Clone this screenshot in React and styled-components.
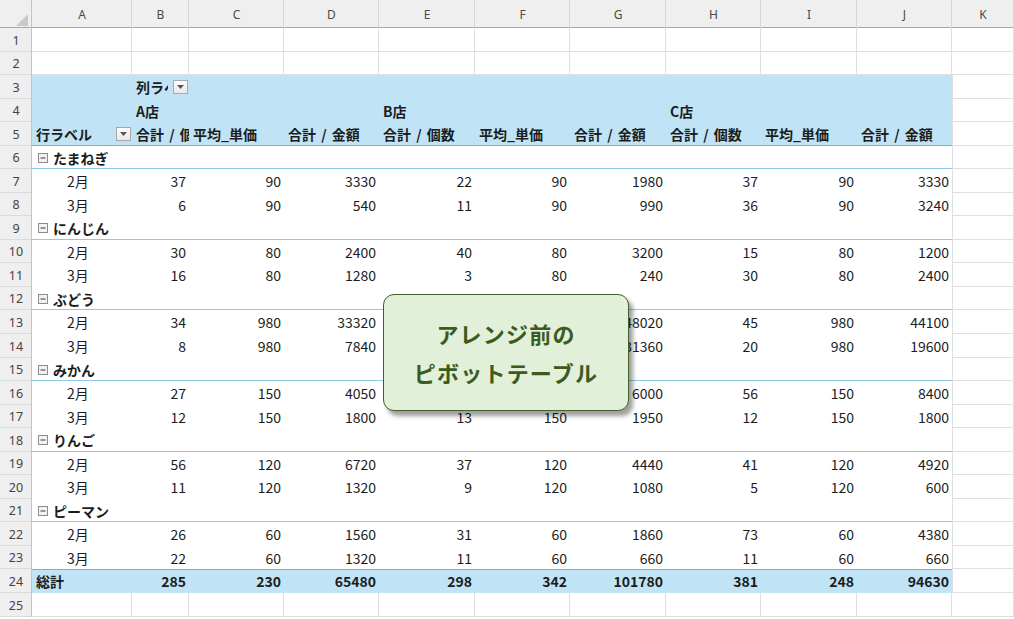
import React from "react";
import styled, { createGlobalStyle } from "styled-components";

const GlobalStyle = createGlobalStyle`
  html, body {
    margin: 0;
    padding: 0;
    background: #ffffff;
  }
  body {
    font-family: "Noto Sans CJK JP", "Noto Sans", sans-serif;
  }
`;

const COLS = "32px 100px 57px 95px 95px 96px 95px 96px 95px 96px 95px 1fr";
const LETTERS = ["A", "B", "C", "D", "E", "F", "G", "H", "I", "J", "K"];
const BLUE = "#c0e4f5";
const GRID = "#dfdfdf";

const LINES = {
  grid: `inset -1px -1px 0 ${GRID}`,
  gridLeft: `inset 1px 0 0 ${GRID}, inset -1px -1px 0 ${GRID}`,
  none: "none",
  cat: "inset 0 -1px 0 #8fc9e8",
  head: "inset 0 -1px 0 #6db4dd",
  total: "inset 0 1px 0 #6db4dd",
};

const Sheet = styled.div`
  position: relative;
  width: 1014px;
  height: 619px;
  overflow: hidden;
  background: #fff;
`;

const HeaderBar = styled.div`
  display: grid;
  grid-template-columns: ${COLS};
  height: 28px;
  background: #efefef;
`;

const ColHead = styled.div`
  display: flex;
  align-items: center;
  justify-content: center;
  font-family: "Noto Sans", sans-serif;
  font-size: 12px;
  color: #4a4a4a;
  box-shadow: inset -1px 0 0 #d6d6d6, inset 0 -1px 0 #a9a9a9;
`;

const Corner = styled.div`
  display: flex;
  align-items: flex-end;
  justify-content: flex-end;
  padding: 0 4px 2px 0;
  box-shadow: inset -1px 0 0 #c4c4c4, inset 0 -1px 0 #a9a9a9;
`;

const Row = styled.div`
  display: grid;
  grid-template-columns: ${COLS};
  height: ${(p) => p.$h}px;
`;

const RowNum = styled.div`
  display: flex;
  align-items: center;
  justify-content: center;
  background: #efefef;
  font-family: "Noto Sans", sans-serif;
  font-size: 12.5px;
  color: #444;
  box-shadow: inset -1px 0 0 #c4c4c4, inset 0 -1px 0 #dadada;
`;

const Cell = styled.div`
  display: flex;
  align-items: center;
  justify-content: ${(p) => (p.$align === "right" ? "flex-end" : "flex-start")};
  gap: 5px;
  min-width: 0;
  overflow: hidden;
  white-space: nowrap;
  padding: 0 3px 0 ${(p) => p.$indent ?? 4}px;
  font-size: 14px;
  font-weight: ${(p) => (p.$bold ? 700 : 400)};
  word-spacing: 2px;
  color: #1c1c1c;
  background: ${(p) => (p.$fill ? BLUE : "#fff")};
  box-shadow: ${(p) => LINES[p.$line || "none"]};
`;

const Clip = styled.span`
  flex: 1;
  min-width: 0;
  overflow: hidden;
`;

const DropBtn = styled.span`
  flex: none;
  width: 15px;
  height: 14px;
  box-sizing: border-box;
  border: 1px solid #a8a8a8;
  background: linear-gradient(#fdfdfd, #e9e9e9);
  display: flex;
  align-items: center;
  justify-content: center;
  margin-right: -2px;
`;

const Callout = styled.div`
  position: absolute;
  left: 383px;
  top: 294px;
  width: 246px;
  height: 117px;
  box-sizing: border-box;
  background: #e2efd9;
  border: 1.5px solid #41602c;
  border-radius: 11px;
  box-shadow: 4px 5px 4px rgba(0, 0, 0, 0.38);
  display: flex;
  flex-direction: column;
  align-items: center;
  justify-content: center;
`;

const CalloutLine = styled.div`
  font-family: "Noto Sans CJK JP", sans-serif;
  font-size: 22px;
  font-weight: 700;
  line-height: 39px;
  letter-spacing: 1.2px;
  color: #3b5b20;
`;

const Dropdown = () => (
  <DropBtn>
    <svg width="7" height="4" viewBox="0 0 7 4">
      <polygon points="0,0 7,0 3.5,4" fill="#555" />
    </svg>
  </DropBtn>
);

const Collapse = () => (
  <svg width="10" height="10" viewBox="0 0 10 10" style={{ flex: "none" }}>
    <rect x="0.5" y="0.5" width="9" height="9" fill="#f2f2f2" stroke="#8c8c8c" />
    <line x1="2.5" y1="5" x2="7.5" y2="5" stroke="#3a3a3a" strokeWidth="1" />
  </svg>
);

const cats = [
  ["たまねぎ", [37, 90, 3330, 22, 90, 1980, 37, 90, 3330], [6, 90, 540, 11, 90, 990, 36, 90, 3240]],
  ["にんじん", [30, 80, 2400, 40, 80, 3200, 15, 80, 1200], [16, 80, 1280, 3, 80, 240, 30, 80, 2400]],
  ["ぶどう", [34, 980, 33320, 49, 980, 48020, 45, 980, 44100], [8, 980, 7840, 32, 980, 31360, 20, 980, 19600]],
  ["みかん", [27, 150, 4050, 40, 150, 6000, 56, 150, 8400], [12, 150, 1800, 13, 150, 1950, 12, 150, 1800]],
  ["りんご", [56, 120, 6720, 37, 120, 4440, 41, 120, 4920], [11, 120, 1320, 9, 120, 1080, 5, 120, 600]],
  ["ピーマン", [26, 60, 1560, 31, 60, 1860, 73, 60, 4380], [22, 60, 1320, 11, 60, 660, 11, 60, 660]],
];

const totals = [285, 230, 65480, 298, 342, 101780, 381, 248, 94630];
const measures = ["合計 / 個数", "平均_単価", "合計 / 金額"];

const rows = [
  { type: "blank" },
  { type: "blank" },
  { type: "h3" },
  { type: "h4" },
  { type: "h5" },
  ...cats.flatMap(([name, feb, mar]) => [
    { type: "cat", label: name },
    { type: "data", label: "2月", vals: feb },
    { type: "data", label: "3月", vals: mar },
  ]),
  { type: "total", vals: totals },
  { type: "blank" },
];

const rowHeight = (i) =>
  Math.round(28 + (i + 1) * 23.54) - Math.round(28 + i * 23.54);

function renderCells(row) {
  const idx = [0, 1, 2, 3, 4, 5, 6, 7, 8, 9];
  switch (row.type) {
    case "blank":
      return idx.map((i) => <Cell key={i} $line="grid" />);
    case "h3":
      return idx.map((i) =>
        i === 1 ? (
          <Cell key={i} $fill $bold>
            <Clip>列ラベル</Clip>
            <Dropdown />
          </Cell>
        ) : (
          <Cell key={i} $fill />
        )
      );
    case "h4":
      return idx.map((i) => (
        <Cell key={i} $fill $bold>
          {i === 1 ? "A店" : i === 4 ? "B店" : i === 7 ? "C店" : ""}
        </Cell>
      ));
    case "h5":
      return idx.map((i) =>
        i === 0 ? (
          <Cell key={i} $fill $bold $line="head">
            <Clip>行ラベル</Clip>
            <Dropdown />
          </Cell>
        ) : (
          <Cell key={i} $fill $bold $line="head">
            {measures[(i - 1) % 3]}
          </Cell>
        )
      );
    case "cat":
      return idx.map((i) =>
        i === 0 ? (
          <Cell key={i} $bold $line="cat" $indent={6}>
            <Collapse />
            {row.label}
          </Cell>
        ) : (
          <Cell key={i} $line="cat" />
        )
      );
    case "data":
      return idx.map((i) =>
        i === 0 ? (
          <Cell key={i} $indent={35}>
            {row.label}
          </Cell>
        ) : (
          <Cell key={i} $align="right">
            {row.vals[i - 1]}
          </Cell>
        )
      );
    case "total":
      return idx.map((i) =>
        i === 0 ? (
          <Cell key={i} $fill $bold $line="total">
            総計
          </Cell>
        ) : (
          <Cell key={i} $fill $bold $line="total" $align="right">
            {row.vals[i - 1]}
          </Cell>
        )
      );
    default:
      return null;
  }
}

export default function App() {
  return (
    <>
      <GlobalStyle />
      <Sheet>
        <HeaderBar>
          <Corner>
            <svg width="12" height="12" viewBox="0 0 12 12">
              <polygon points="12,0 12,12 0,12" fill="#c9c9c9" />
            </svg>
          </Corner>
          {LETTERS.map((l) => (
            <ColHead key={l}>{l}</ColHead>
          ))}
        </HeaderBar>
        {rows.map((row, i) => (
          <Row key={i} $h={rowHeight(i)}>
            <RowNum>{i + 1}</RowNum>
            {renderCells(row)}
            <Cell $line={row.type === "blank" ? "grid" : "gridLeft"} />
          </Row>
        ))}
        <Callout>
          <CalloutLine>アレンジ前の</CalloutLine>
          <CalloutLine>ピボットテーブル</CalloutLine>
        </Callout>
      </Sheet>
    </>
  );
}
